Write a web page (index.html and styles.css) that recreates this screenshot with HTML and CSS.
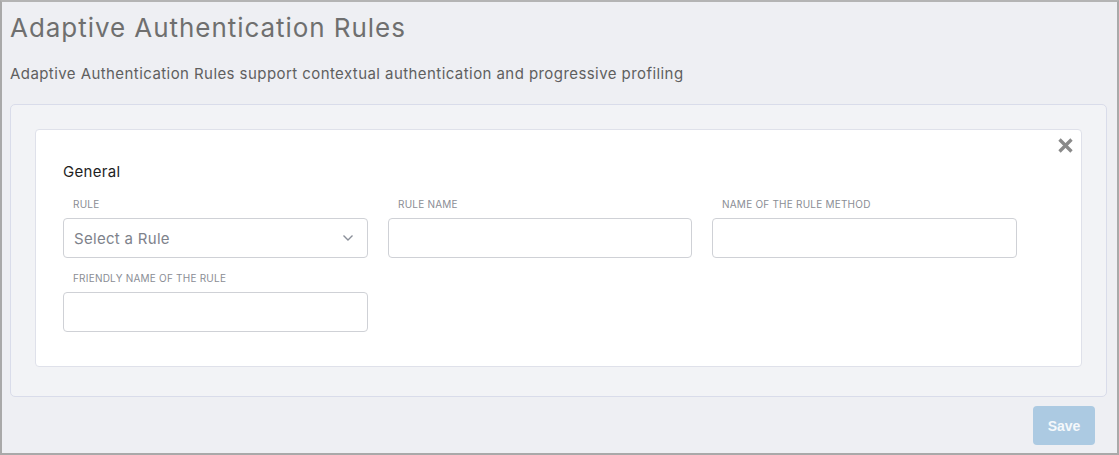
FILE: index.html
```html
<!DOCTYPE html>
<html lang="en">
<head>
<meta charset="utf-8">
<title>Adaptive Authentication Rules</title>
<link rel="stylesheet" href="styles.css">
</head>
<body>
<div class="frame">
  <h1 class="title">Adaptive Authentication Rules</h1>
  <p class="subtitle">Adaptive Authentication Rules support contextual authentication and progressive profiling</p>
  <div class="panel">
    <div class="card">
      <button class="close" aria-label="Close">
        <svg width="15" height="15" viewBox="0 0 15 15"><path d="M1.5 1.5L13.5 13.5M13.5 1.5L1.5 13.5" stroke="#8a8a8a" stroke-width="3.3" stroke-linecap="butt"/></svg>
      </button>
      <h2 class="section">General</h2>
      <div class="grid">
        <div class="field">
          <label class="label">RULE</label>
          <div class="input select">
            <span class="placeholder">Select a Rule</span>
            <svg class="chev" width="12" height="8" viewBox="0 0 12 8"><path d="M1.5 1.5L6 6L10.5 1.5" fill="none" stroke="#8a8f99" stroke-width="1.4"/></svg>
          </div>
        </div>
        <div class="field">
          <label class="label">RULE NAME</label>
          <div class="input"></div>
        </div>
        <div class="field">
          <label class="label">NAME OF THE RULE METHOD</label>
          <div class="input"></div>
        </div>
        <div class="field">
          <label class="label">FRIENDLY NAME OF THE RULE</label>
          <div class="input"></div>
        </div>
      </div>
    </div>
  </div>
  <div class="actions">
    <button class="save">Save</button>
  </div>
</div>
</body>
</html>
```

FILE: styles.css
```css
* { box-sizing: border-box; }
html, body { margin: 0; padding: 0; }
body {
  font-family: Inter, "Open Sans", Roboto, sans-serif;
  background: #eeeff3;
}
.frame {
  width: 1119px;
  height: 455px;
  border: 2px solid #a9a9a9;
  border-top-color: #b4b4b4;
  background: #eeeff3;
  padding: 0 10px 0 8px;
}
.title {
  margin: 0;
  padding-top: 10px;
  font-size: 26px;
  font-weight: 400;
  line-height: 32px;
  color: #6f6f6f;
  letter-spacing: 0.95px;
}
.subtitle {
  margin: 20px 0 0;
  font-size: 15px;
  line-height: 20px;
  color: #5f5f5f;
  letter-spacing: 0.43px;
}
.panel {
  margin-top: 20px;
  width: 1097px;
  background: #f2f3f6;
  border: 1px solid #d9dcea;
  border-radius: 5px;
  padding: 24px 24px 29px 24px;
}
.card {
  position: relative;
  background: #fff;
  border: 1px solid #dfe1ea;
  border-radius: 4px;
  padding: 30px 27px 34px 27px;
}
.close {
  position: absolute;
  top: 8px;
  right: 8px;
  border: 0;
  background: none;
  padding: 0;
  width: 15px;
  height: 15px;
  cursor: pointer;
}
.close svg { display: block; }
.section {
  margin: 0;
  font-size: 15px;
  font-weight: 400;
  line-height: 24px;
  color: #1e1e1e;
  letter-spacing: 0.3px;
}
.grid {
  margin-top: 13px;
  display: grid;
  grid-template-columns: 305px 304px 305px;
  column-gap: 20px;
  row-gap: 13px;
}
.field { display: flex; flex-direction: column; }
.label {
  font-size: 10px;
  line-height: 14px;
  color: #8a8d95;
  padding-left: 10px;
  margin-bottom: 7px;
  letter-spacing: 0.22px;
}
.input {
  height: 40px;
  border: 1px solid #cfd1d6;
  border-radius: 4px;
  background: #fff;
}
.select {
  display: flex;
  align-items: center;
  justify-content: space-between;
  padding: 0 13px 0 10px;
}
.placeholder {
  font-size: 15px;
  color: #7e828b;
  letter-spacing: 0.3px;
}
.chev { display: block; }
.actions {
  display: flex;
  justify-content: flex-end;
  padding-top: 9px;
  padding-right: 12px;
}
.save {
  width: 62px;
  height: 39px;
  border: 0;
  border-radius: 4px;
  background: #accae2;
  color: #f4f8fb;
  font-family: "Liberation Sans", Arial, sans-serif;
  font-size: 14px;
  font-weight: 700;
}
```
